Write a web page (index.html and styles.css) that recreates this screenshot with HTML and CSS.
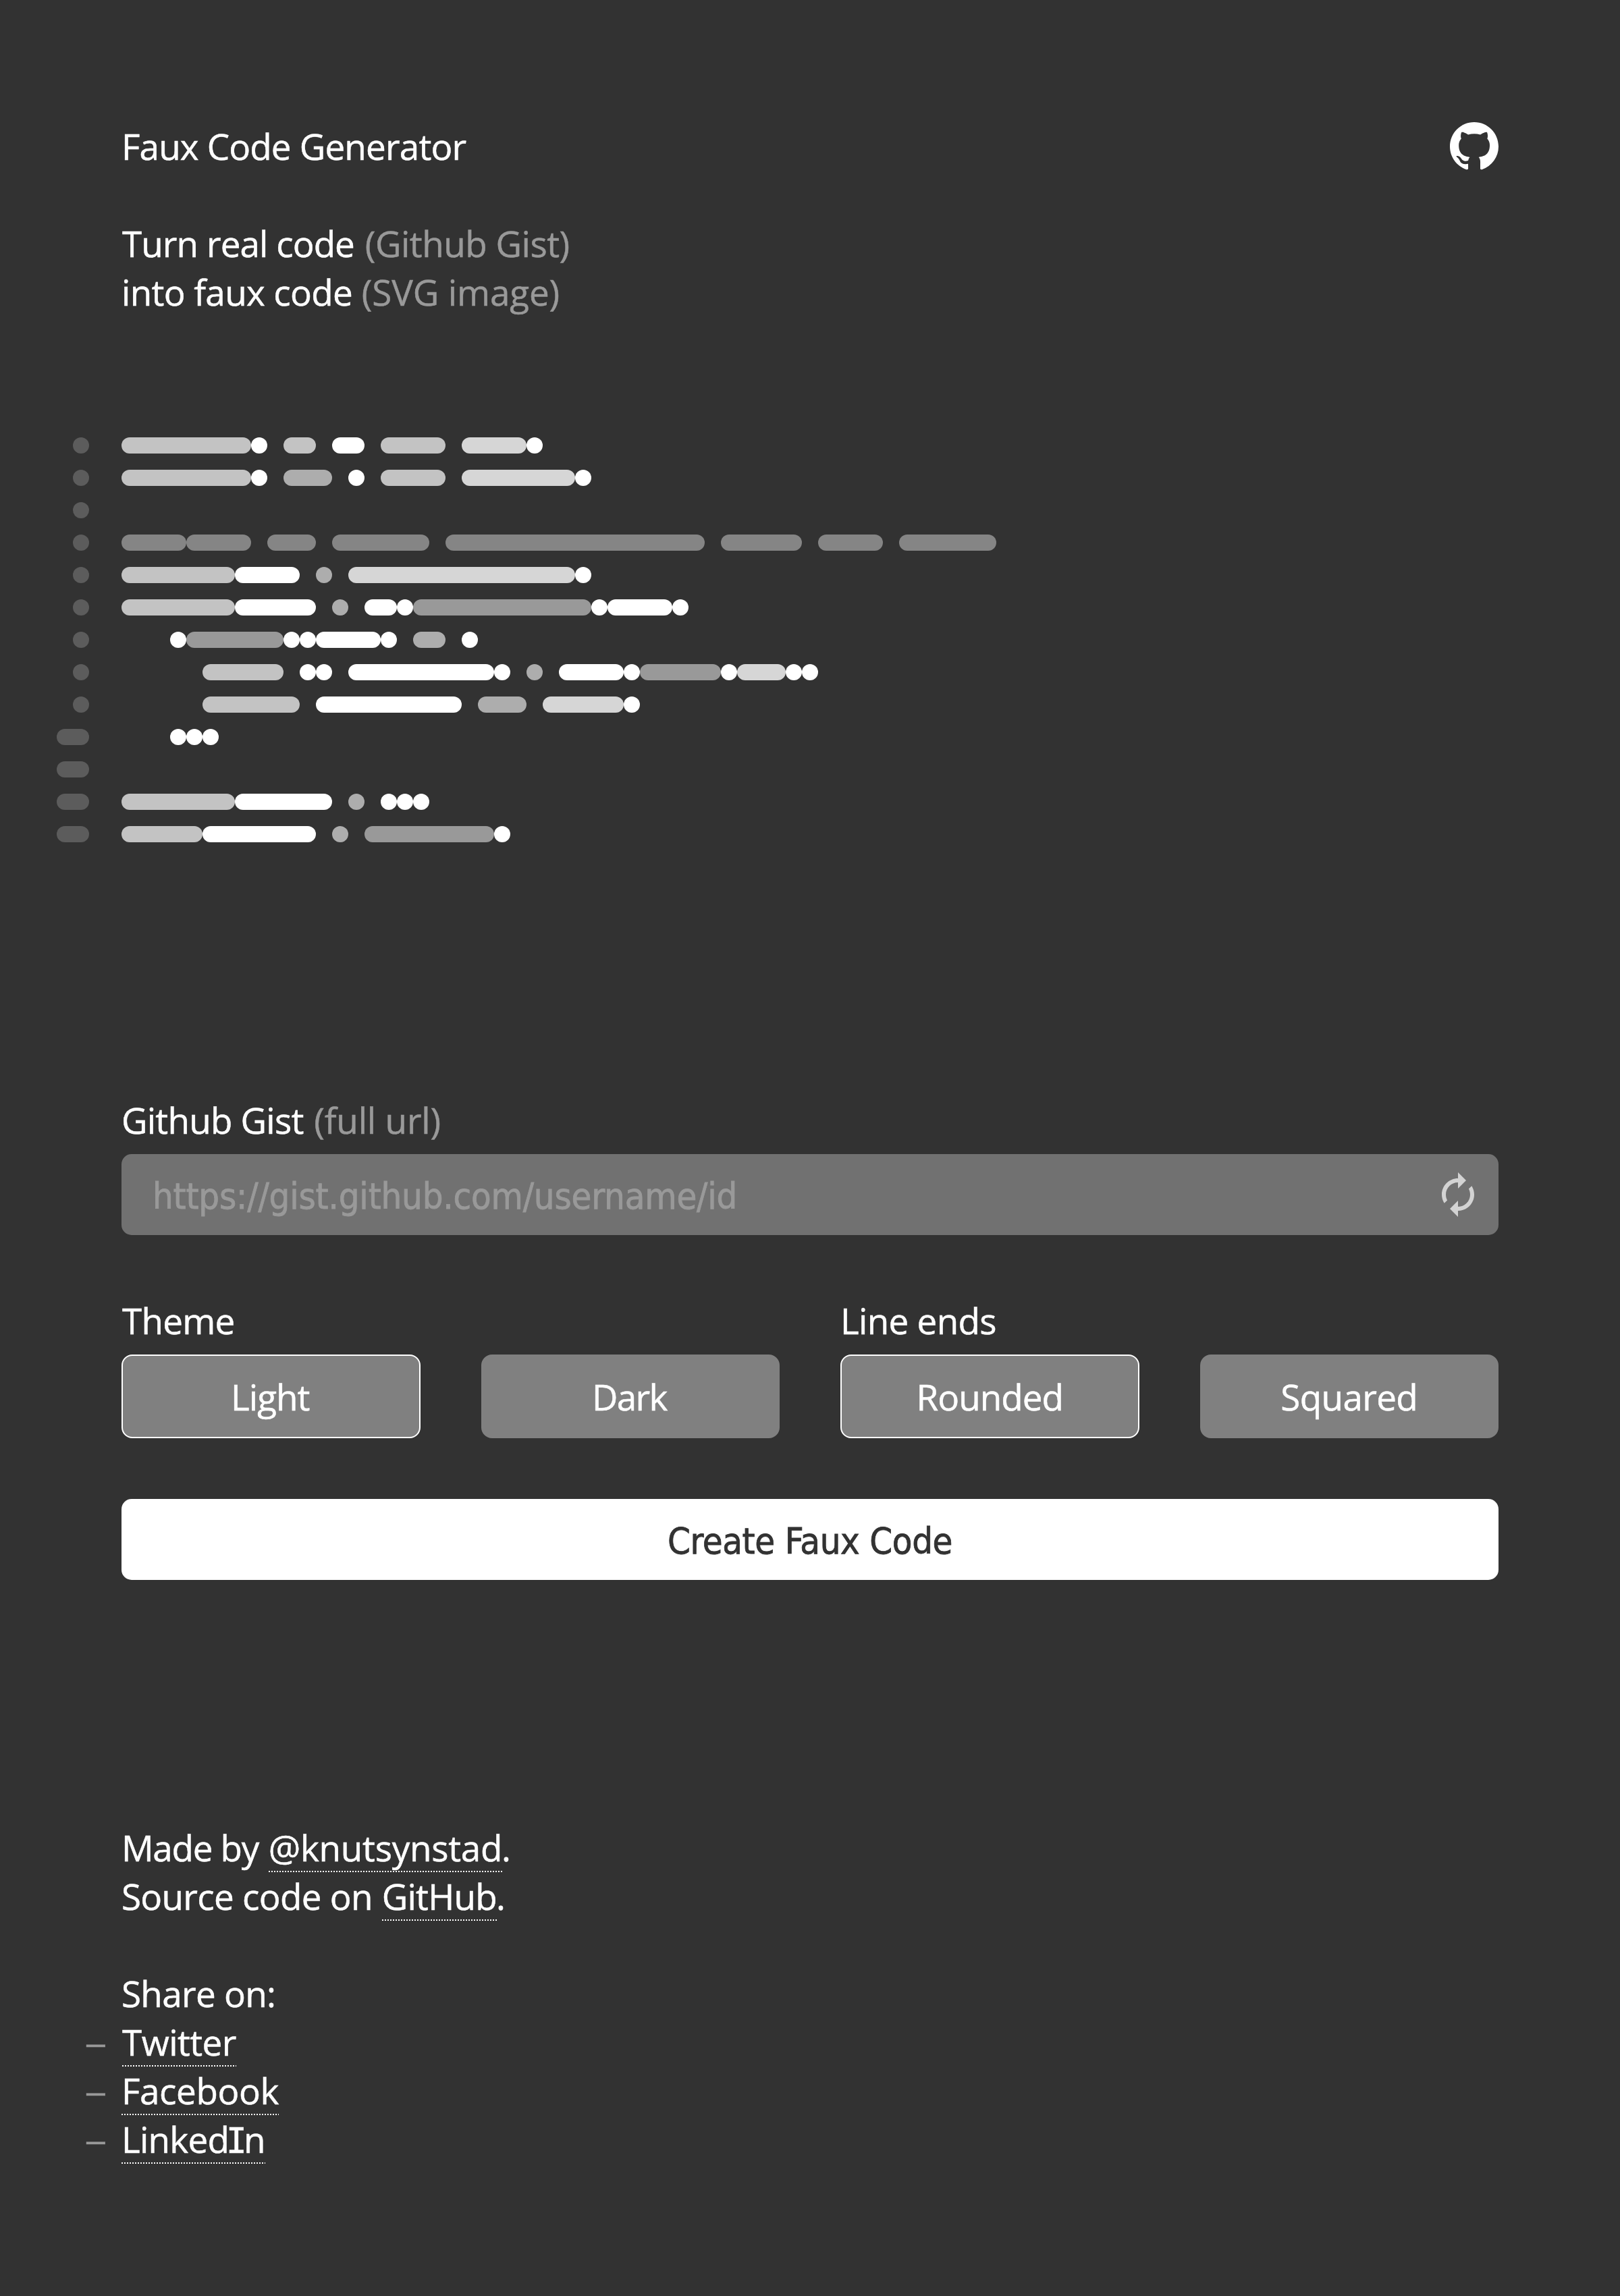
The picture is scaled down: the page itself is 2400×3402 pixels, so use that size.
FILE: index.html
```html
<!DOCTYPE html>
<html lang="en">
<head>
<meta charset="utf-8">
<title>Faux Code Generator</title>
<link rel="stylesheet" href="styles.css">
</head>
<body>
<header class="header">
  <h1 class="title">Faux Code Generator</h1>
  <a class="logo" href="#" aria-label="GitHub"><svg viewBox="0 0 16 16"><path fill-rule="evenodd" d="M8 0C3.58 0 0 3.58 0 8c0 3.54 2.29 6.53 5.47 7.59.4.07.55-.17.55-.38 0-.19-.01-.82-.01-1.49-2.01.37-2.53-.49-2.69-.94-.09-.23-.48-.94-.82-1.13-.28-.15-.68-.52-.01-.53.63-.01 1.08.58 1.23.82.72 1.21 1.87.87 2.33.66.07-.52.28-.87.51-1.07-1.78-.2-3.64-.89-3.64-3.95 0-.87.31-1.59.82-2.15-.08-.2-.36-1.02.08-2.12 0 0 .67-.21 2.2.82.64-.18 1.32-.27 2-.27.68 0 1.36.09 2 .27 1.53-1.04 2.2-.82 2.2-.82.44 1.1.16 1.92.08 2.12.51.56.82 1.27.82 2.15 0 3.07-1.87 3.75-3.65 3.95.29.25.54.73.54 1.48 0 1.07-.01 1.93-.01 2.2 0 .21.15.46.55.38A8.013 8.013 0 0 0 16 8c0-4.42-3.58-8-8-8z"/></svg></a>
</header>
<p class="intro"><span class="real">Turn real code</span> <span class="muted gist">(Github Gist)</span><br><span class="faux">into faux code</span> <span class="muted image">(SVG image)</span></p>

<svg class="code" viewBox="-4 0 58 25">
  <g class="number">
    <rect x="-3" y="0" width="1"/><rect x="-3" y="2" width="1"/><rect x="-3" y="4" width="1"/><rect x="-3" y="6" width="1"/><rect x="-3" y="8" width="1"/><rect x="-3" y="10" width="1"/><rect x="-3" y="12" width="1"/><rect x="-3" y="14" width="1"/><rect x="-3" y="16" width="1"/><rect x="-4" y="18" width="2"/><rect x="-4" y="20" width="2"/><rect x="-4" y="22" width="2"/><rect x="-4" y="24" width="2"/>
  </g>
  <g class="keyword">
    <rect x="0" y="0" width="8"/><rect x="10" y="0" width="2"/><rect x="16" y="0" width="4"/>
    <rect x="0" y="2" width="8"/><rect x="16" y="2" width="4"/>
    <rect x="0" y="8" width="7"/><rect x="0" y="10" width="7"/>
    <rect x="5" y="14" width="5"/><rect x="5" y="16" width="6"/>
    <rect x="0" y="22" width="7"/><rect x="0" y="24" width="5"/>
  </g>
  <g class="string">
    <rect x="21" y="0" width="4"/><rect x="21" y="2" width="7"/><rect x="14" y="8" width="14"/><rect x="38" y="14" width="3"/><rect x="26" y="16" width="5"/>
  </g>
  <g class="operator">
    <rect x="10" y="2" width="3"/><rect x="12" y="8" width="1"/><rect x="13" y="10" width="1"/><rect x="18" y="12" width="2"/><rect x="25" y="14" width="1"/><rect x="22" y="16" width="3"/><rect x="14" y="22" width="1"/><rect x="13" y="24" width="1"/>
  </g>
  <g class="comment">
    <rect x="0" y="6" width="4"/><rect x="4" y="6" width="4"/><rect x="9" y="6" width="3"/><rect x="13" y="6" width="6"/><rect x="20" y="6" width="16"/><rect x="37" y="6" width="5"/><rect x="43" y="6" width="4"/><rect x="48" y="6" width="6"/>
  </g>
  <g class="function">
    <rect x="18" y="10" width="11"/><rect x="4" y="12" width="6"/><rect x="32" y="14" width="5"/><rect x="15" y="24" width="8"/>
  </g>
  <g class="plain">
    <rect x="8" y="0" width="1"/><rect x="13" y="0" width="2"/><rect x="25" y="0" width="1"/>
    <rect x="8" y="2" width="1"/><rect x="14" y="2" width="1"/><rect x="28" y="2" width="1"/>
    <rect x="7" y="8" width="4"/><rect x="28" y="8" width="1"/>
    <rect x="7" y="10" width="5"/><rect x="15" y="10" width="2"/><rect x="17" y="10" width="1"/><rect x="29" y="10" width="1"/><rect x="30" y="10" width="4"/><rect x="34" y="10" width="1"/>
    <rect x="3" y="12" width="1"/><rect x="10" y="12" width="1"/><rect x="11" y="12" width="1"/><rect x="12" y="12" width="4"/><rect x="16" y="12" width="1"/><rect x="21" y="12" width="1"/>
    <rect x="11" y="14" width="1"/><rect x="12" y="14" width="1"/><rect x="14" y="14" width="9"/><rect x="23" y="14" width="1"/><rect x="27" y="14" width="4"/><rect x="31" y="14" width="1"/><rect x="37" y="14" width="1"/><rect x="41" y="14" width="1"/><rect x="42" y="14" width="1"/>
    <rect x="12" y="16" width="9"/><rect x="31" y="16" width="1"/>
    <rect x="3" y="18" width="1"/><rect x="4" y="18" width="1"/><rect x="5" y="18" width="1"/>
    <rect x="7" y="22" width="6"/><rect x="16" y="22" width="1"/><rect x="17" y="22" width="1"/><rect x="18" y="22" width="1"/>
    <rect x="5" y="24" width="7"/><rect x="23" y="24" width="1"/>
  </g>
</svg>

<form class="form">
  <label class="label" for="url"><span class="field">Github Gist</span> <span class="muted hint">(full url)</span></label>
  <div class="url">
    <input class="input" id="url" type="text" placeholder="https://gist.github.com/username/id">
    <svg class="refresh" viewBox="0 0 24 24"><path d="M12 6v3l4-4-4-4v3c-4.42 0-8 3.58-8 8 0 1.57.46 3.03 1.24 4.26L6.7 14.8c-.45-.83-.7-1.79-.7-2.8 0-3.31 2.69-6 6-6zm6.76 1.74L17.3 9.2c.44.84.7 1.79.7 2.8 0 3.31-2.69 6-6 6v-3l-4 4 4 4v-3c4.42 0 8-3.58 8-8 0-1.57-.46-3.03-1.24-4.26z"/></svg>
  </div>
  <div class="options">
    <div class="group">
      <div class="label theme">Theme</div>
      <div class="choices">
        <div class="choice selected"><span class="light">Light</span></div>
        <div class="choice"><span class="dark">Dark</span></div>
      </div>
    </div>
    <div class="group">
      <div class="label ends">Line ends</div>
      <div class="choices">
        <div class="choice selected"><span class="rounded">Rounded</span></div>
        <div class="choice"><span class="squared">Squared</span></div>
      </div>
    </div>
  </div>
  <button class="submit" type="button">Create Faux Code</button>
</form>

<footer class="footer">
  <p><span class="made">Made by</span> <a class="link author" href="#">@knutsynstad</a><span class="stop">.</span><br><span class="source">Source code on</span> <a class="link github" href="#">GitHub</a><span class="stop">.</span></p>
  <p class="share">Share on:</p>
  <ul class="shares">
    <li><a class="link twitter" href="#">Twitter</a></li>
    <li><a class="link facebook" href="#">Facebook</a></li>
    <li><a class="link linkedin" href="#">Linked<span class="slab">I</span>n</a></li>
  </ul>
</footer>
</body>
</html>
```
FILE: styles.css
```css
* { box-sizing: border-box; margin: 0; padding: 0; }

body {
  background: #323232;
  color: #fff;
  font: 400 53px/72px "Open Sans", sans-serif;
  -webkit-text-stroke: 0.5px currentColor;
  padding: 181px 180px 196px;
}

.muted { color: #999; -webkit-text-stroke-color: #999; }

.header { display: flex; justify-content: space-between; height: 72px; }
.title { font-size: inherit; font-weight: 400; letter-spacing: -0.83px; }
.logo { display: block; width: 72px; height: 72px; }
.logo svg { display: block; width: 72px; height: 72px; fill: #fff; }

.intro { margin-top: 72px; }
.real { letter-spacing: -0.94px; margin-left: 1px; }
.gist { letter-spacing: -0.49px; margin-left: 2px; }
.faux { letter-spacing: -0.65px; }
.image { letter-spacing: -0.13px; }

.code { display: block; width: 1392px; height: 600px; margin: 179px 0 0 -96px; }
.code rect { height: 1px; rx: 0.5px; }
.number { fill: #5c5c5c; }
.keyword { fill: #c3c3c3; }
.string { fill: #d6d6d6; }
.operator { fill: #adadad; }
.comment { fill: #858585; }
.function { fill: #999; }
.plain { fill: #fff; }

.form { margin-top: 375px; }
.label { display: block; padding-top: 1px; margin-bottom: 14px; }
.field { letter-spacing: -0.78px; }
.hint { letter-spacing: -0.2px; margin-left: 2px; }
.theme { letter-spacing: -0.76px; padding-left: 1px; }
.ends { letter-spacing: -0.7px; }

.url {
  display: flex;
  align-items: center;
  height: 120px;
  padding: 0 24px 0 46px;
  border-radius: 15px;
  background: #717171;
}
.input {
  flex: 1;
  height: 120px;
  padding-top: 4px;
  border: 0;
  outline: 0;
  background: none;
  color: #fff;
  font: 54px "DejaVu Sans Condensed", "DejaVu Sans", sans-serif;
  letter-spacing: -0.2px;
}
.input::placeholder { color: #999; opacity: 1; -webkit-text-stroke: 0.8px #999; }
.refresh { width: 72px; height: 72px; fill: #d3d3d3; }

.options, .choices { display: grid; grid-template-columns: 1fr 1fr; gap: 90px; }
.options { margin-top: 90px; }
.choice {
  height: 124px;
  border: 2px solid #808080;
  border-radius: 16px;
  background: #808080;
  line-height: 122px;
  text-align: center;
}
.selected { border-color: #fff; }
.light { letter-spacing: -0.96px; margin-right: 2px; }
.dark { letter-spacing: -1.72px; margin-right: 3px; }
.rounded { letter-spacing: -0.98px; }
.squared { letter-spacing: -0.64px; }

.submit {
  display: block;
  width: 100%;
  height: 120px;
  margin-top: 90px;
  padding: 4px 0 0;
  border: 0;
  border-radius: 15px;
  background: #fff;
  color: #323232;
  font: 54px "DejaVu Sans Condensed", "DejaVu Sans", sans-serif;
  letter-spacing: -0.42px;
  -webkit-text-stroke: 0.8px #323232;
}

.footer { margin-top: 361px; }
.link {
  color: inherit;
  text-decoration: none;
  background: repeating-linear-gradient(90deg, #fff 0 2px, transparent 2px 4px) left bottom / 100% 2px no-repeat;
}
.made { letter-spacing: -1.3px; }
.author { letter-spacing: -0.27px; margin-left: 1px; }
.source { letter-spacing: -0.7px; }
.github { letter-spacing: -0.76px; }
.stop { margin-left: -1px; }
.share { margin-top: 72px; letter-spacing: -0.7px; }
.shares { list-style: none; margin-left: -52px; }
.shares li { display: flex; align-items: baseline; height: 72px; }
.shares li::before {
  content: "–";
  width: 52px;
  color: #999;
  font-family: "Liberation Sans", sans-serif;
  font-size: 50px;
  -webkit-text-stroke: 0.4px #999;
  transform: translateY(-2px);
}
.twitter { letter-spacing: -0.56px; margin-left: 1px; }
.facebook { letter-spacing: -0.38px; }
.linkedin { letter-spacing: -0.75px; }
/* capital I with serifs, as in slab-flavoured grotesques */
.slab { font-family: "DejaVu Sans Mono", monospace; font-size: 51px; line-height: 1; margin: 0 -4px; }
```
